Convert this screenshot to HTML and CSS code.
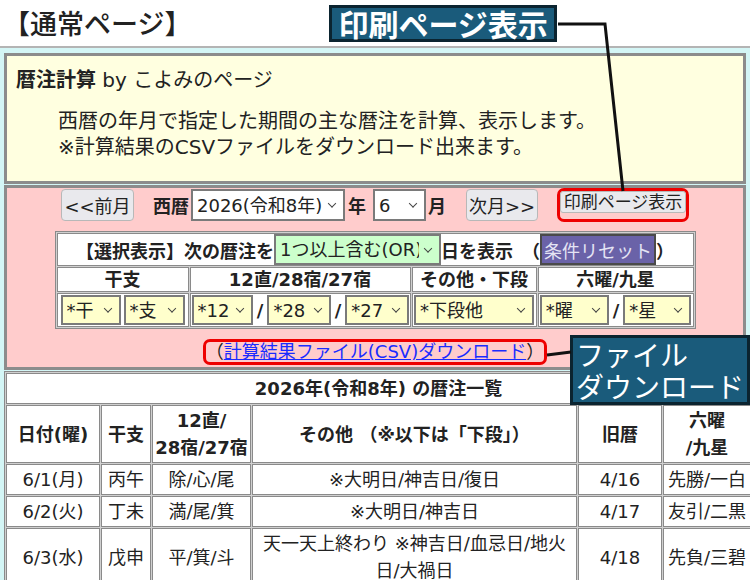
FILE: index.html
```html
<!DOCTYPE html>
<html lang="ja">
<head>
  <meta charset="UTF-8">
  <meta name="viewport" content="width=device-width, initial-scale=1.0">
  <title>暦注計算</title>
  <link rel="stylesheet" href="styles.css">
</head>
<body>
  <div class="top">
    <h1 class="page-title">【通常ページ】</h1>
    <div class="note note-print">印刷ページ表示</div>
  </div>

  <div class="page">
    <div class="intro">
      <h2><b>暦注計算</b> by こよみのページ</h2>
      <p>西暦の年月で指定した期間の主な暦注を計算、表示します。<br>※計算結果のCSVファイルをダウンロード出来ます。</p>
    </div>

    <div class="controls">
      <div class="nav">
        <button class="btn btn-prev">&lt;&lt;前月</button>
        <b class="lbl-year">西暦</b>
        <span class="sel sel-year"><select><option>2026(令和8年)</option></select></span>
        <b class="lbl-nen">年</b>
        <span class="sel sel-month"><select><option>6</option></select></span>
        <b class="lbl-tsuki">月</b>
        <button class="btn btn-next">次月&gt;&gt;</button>
        <span class="mark mark-print"><button class="btn btn-print">印刷ページ表示</button></span>
      </div>

      <table class="filter">
        <colgroup>
          <col class="fc1"><col class="fc2"><col class="fc3"><col class="fc4">
        </colgroup>
        <tr class="f-top">
          <td colspan="4">
            <div class="cell-row">
              <b>【選択表示】次の暦注を</b><span class="sel sel-or"><select><option>1つ以上含む(OR)</option></select></span><b>日を表示　（</b><button class="reset">条件リセット</button><b>）</b>
            </div>
          </td>
        </tr>
        <tr class="f-cols">
          <th>干支</th><th>12直/28宿/27宿</th><th>その他・下段</th><th>六曜/九星</th>
        </tr>
        <tr class="f-sels">
          <td>
            <div class="cell-row">
              <span class="sel sel-y w-kan"><select><option>*干</option></select></span><span class="sel sel-y w-shi"><select><option>*支</option></select></span>
            </div>
          </td>
          <td>
            <div class="cell-row">
              <span class="sel sel-y w-12"><select><option>*12</option></select></span><b class="slash">/</b><span class="sel sel-y w-28"><select><option>*28</option></select></span><b class="slash">/</b><span class="sel sel-y w-27"><select><option>*27</option></select></span>
            </div>
          </td>
          <td>
            <div class="cell-row">
              <span class="sel sel-y w-gedan"><select><option>*下段他</option></select></span>
            </div>
          </td>
          <td>
            <div class="cell-row">
              <span class="sel sel-y w-you"><select><option>*曜</option></select></span><b class="slash">/</b><span class="sel sel-y w-sei"><select><option>*星</option></select></span>
            </div>
          </td>
        </tr>
      </table>

      <div class="download">
        <span class="mark mark-csv">（<a href="#">計算結果ファイル(CSV)ダウンロード</a>）</span>
      </div>
    </div>

    <table class="result">
      <colgroup>
        <col class="rc1"><col class="rc2"><col class="rc3"><col class="rc4"><col class="rc5"><col class="rc6">
      </colgroup>
      <tr class="r-cap"><th colspan="6">2026年(令和8年) の暦注一覧</th></tr>
      <tr class="r-head">
        <th>日付(曜)</th>
        <th>干支</th>
        <th>12直/<br>28宿/27宿</th>
        <th>その他 （※以下は「下段」）</th>
        <th>旧暦</th>
        <th>六曜<br>/九星</th>
      </tr>
      <tr>
        <td>6/1(月)</td><td>丙午</td><td>除/心/尾</td><td>※大明日/神吉日/復日</td><td>4/16</td><td>先勝/一白</td>
      </tr>
      <tr>
        <td>6/2(火)</td><td>丁未</td><td>満/尾/箕</td><td>※大明日/神吉日</td><td>4/17</td><td>友引/二黒</td>
      </tr>
      <tr>
        <td>6/3(水)</td><td>戊申</td><td>平/箕/斗</td><td>天一天上終わり ※神吉日/血忌日/地火日/大禍日</td><td>4/18</td><td>先負/三碧</td>
      </tr>
    </table>
  </div>

  <div class="note note-file">ファイル<br>ダウンロード</div>

  <svg class="leaders" width="750" height="580" viewBox="0 0 750 580">
    <polyline points="558,24 605,24 623,191" />
    <polyline points="547,355 571,352" />
  </svg>
</body>
</html>
```

FILE: styles.css
```css
body {
  margin: 0;
  position: relative;
  font-family: "DejaVu Sans", "Noto Sans CJK JP", sans-serif;
  color: #222;
  background-color: #ffffff;
  overflow: hidden;
}

/* annotated header */
.top {
  height: 46px;
  display: flex;
  align-items: center;
  border-bottom: 2px solid #b4b4b4;
  padding-left: 3px;
}

.page-title {
  margin: 0;
  font-family: "Noto Sans CJK JP", sans-serif;
  font-size: 27px;
  font-weight: 500;
  line-height: 30px;
}

.note {
  background-color: #1a5b7b;
  color: #ffffff;
  border: 3px solid #0b2430;
  font-family: "Noto Sans CJK JP", sans-serif;
}

.note-print {
  margin-left: 138px;
  margin-top: 1px;
  font-size: 30px;
  font-weight: bold;
  line-height: 31px;
  padding: 0 6px;
}

.note-file {
  position: absolute;
  left: 570px;
  top: 335px;
  width: 180px;
  box-sizing: border-box;
  font-size: 28px;
  line-height: 32px;
  padding: 0 0 0 3px;
  white-space: nowrap;
  overflow: hidden;
}

.leaders {
  position: absolute;
  left: 0;
  top: 0;
  pointer-events: none;
}

.leaders polyline {
  fill: none;
  stroke: #111;
  stroke-width: 3;
}

/* page */
.page {
  background-color: #d4f6f6;
  padding: 5px 4px 0;
}

.intro {
  background-color: #ffffe0;
  border: 3px solid #8c8c8c;
  padding: 10px 10px 21px 9px;
}

.intro h2 {
  margin: 0;
  font-size: 20px;
  font-weight: normal;
  line-height: 28px;
}

.intro p {
  margin: 14px 0 0 42px;
  font-size: 20px;
  line-height: 26px;
}

.controls {
  background-color: #ffcccc;
  border: 3px solid #8c8c8c;
  margin-top: 1px;
  padding: 1px 0 2px;
}

/* month navigation */
.nav {
  display: flex;
  justify-content: center;
  align-items: center;
  height: 32px;
  font-size: 18px;
}

.btn {
  font-family: inherit;
  font-size: 18px;
  color: #222;
  background-color: #e9e9ed;
  border: 1px solid #b8b8b8;
  border-radius: 4px;
  height: 32px;
  padding: 0;
}

.btn-prev { width: 73px; }
.btn-next { width: 72px; margin-left: 20px; }

.lbl-year { margin-left: 19px; margin-right: 2px; }
.lbl-nen { margin-left: 3px; margin-right: 7px; }
.lbl-tsuki { margin-left: 2px; }

.mark {
  display: inline-block;
  border: 3px solid #ee0000;
  border-radius: 7px;
}

.mark-print {
  margin-left: 19px;
  height: 28px;
}

.btn-print {
  height: 22px;
  width: 126px;
  font-size: 17px;
  line-height: 20px;
  border-radius: 3px;
}

/* selects */
.sel {
  position: relative;
  display: inline-block;
}

.sel select {
  appearance: none;
  -webkit-appearance: none;
  font-family: inherit;
  font-size: 18px;
  color: #222;
  background-color: #ffffff;
  border: 2px solid #7a7a7a;
  border-radius: 0;
  height: 32px;
  width: 100%;
  padding: 0 20px 0 4px;
  margin: 0;
}

.sel::after {
  content: "";
  position: absolute;
  right: 10px;
  top: 50%;
  width: 5px;
  height: 5px;
  border-right: 1.5px solid #444;
  border-bottom: 1.5px solid #444;
  transform: translateY(-75%) rotate(45deg);
  pointer-events: none;
}

.sel-year { width: 154px; }
.sel-month { width: 53px; }

.sel-or { width: 167px; }
.sel-or select {
  background-color: #ccffcc;
  height: 31px;
}

.sel-y select {
  background-color: #ffffcc;
  height: 30px;
}

.w-kan { width: 60px; }
.w-shi { width: 61px; }
.w-12 { width: 63px; }
.w-28 { width: 65px; }
.w-27 { width: 65px; }
.w-gedan { width: 120px; }
.w-you { width: 69px; }
.w-sei { width: 68px; }

/* filter table */
.filter {
  width: 634px;
  margin: 10px auto 0;
  table-layout: fixed;
  border-collapse: separate;
  border-spacing: 1px;
  background-color: #d0d0d0;
  border: 1px solid #8a8a8a;
  font-size: 18px;
}

.fc1 { width: 132px; }
.fc2 { width: 221px; }
.fc3 { width: 125px; }
.fc4 { width: 156px; }

.filter td, .filter th {
  background-color: #ffffff;
  border: 1px solid #8a8a8a;
  padding: 0 1px;
  text-align: center;
  vertical-align: middle;
}

.f-top td { height: 31px; }
.f-cols th { height: 23px; line-height: 23px; }
.f-sels td { height: 32px; }

.cell-row {
  display: flex;
  justify-content: center;
  align-items: center;
  gap: 3px;
}

.f-top .cell-row { gap: 0; }

.reset {
  font-family: inherit;
  font-size: 18px;
  color: #e4e4f4;
  background-color: #6a62a8;
  border: 2px solid #4a4a4a;
  height: 31px;
  width: 116px;
  padding: 0;
}

.slash {
  margin: 0 1px;
}

/* csv link */
.download {
  text-align: center;
  margin-top: 10px;
  font-size: 18px;
}

.mark-csv {
  line-height: 20px;
  padding: 0;
}

.mark-csv a {
  color: #1a2cff;
}

/* results */
.result {
  width: 742px;
  margin-top: 1px;
  table-layout: fixed;
  border-collapse: separate;
  border-spacing: 1px;
  background-color: #d0d0d0;
  border: 1px solid #8a8a8a;
  font-size: 18px;
}

.rc1 { width: 94px; }
.rc2 { width: 50px; }
.rc3 { width: 99px; }
.rc4 { width: 325px; }
.rc5 { width: 84px; }
.rc6 { width: 88px; }

.result td, .result th {
  background-color: #ffffff;
  border: 1px solid #8a8a8a;
  padding: 1px 2px;
  line-height: 27px;
  text-align: center;
  vertical-align: middle;
}

.r-cap th { height: 25px; }
```
